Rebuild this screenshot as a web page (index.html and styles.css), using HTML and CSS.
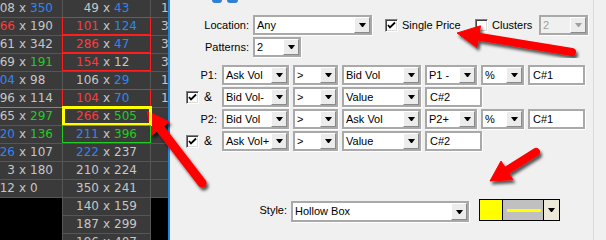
FILE: index.html
```html
<html lang="en">
<head>
  <meta charset="UTF-8">
  <title>Pattern Settings</title>
  <link rel="stylesheet" href="styles.css">
</head>
<body>

  <div class="ladder">
    <div class="col col1">
      <div class="cell"><span class="v"><span class="l">108</span><span class="x">x</span><span class="r bl">350</span></span></div>
      <div class="cell"><span class="v"><span class="l rd">166</span><span class="x">x</span><span class="r">190</span></span></div>
      <div class="cell"><span class="v"><span class="l">161</span><span class="x">x</span><span class="r">342</span></span></div>
      <div class="cell"><span class="v"><span class="l">169</span><span class="x">x</span><span class="r gr">191</span></span></div>
      <div class="cell"><span class="v"><span class="l bl">104</span><span class="x">x</span><span class="r">98</span></span></div>
      <div class="cell sep-grn"><span class="v"><span class="l">196</span><span class="x">x</span><span class="r">114</span></span></div>
      <div class="cell"><span class="v"><span class="l">165</span><span class="x">x</span><span class="r gr">297</span></span></div>
      <div class="cell"><span class="v"><span class="l bl">120</span><span class="x">x</span><span class="r gr">136</span></span></div>
      <div class="cell"><span class="v"><span class="l bl">126</span><span class="x">x</span><span class="r">107</span></span></div>
      <div class="cell"><span class="v"><span class="l">3</span><span class="x">x</span><span class="r">180</span></span></div>
      <div class="cell"><span class="v"><span class="l">112</span><span class="x">x</span><span class="r">0</span></span></div>
    </div>

    <div class="col col2">
      <div class="cell"><span class="v"><span class="l">49</span><span class="x">x</span><span class="r bl">43</span></span></div>
      <div class="cell box-red"><span class="v"><span class="l rd">101</span><span class="x">x</span><span class="r bl">124</span></span></div>
      <div class="cell box-red"><span class="v"><span class="l rd">286</span><span class="x">x</span><span class="r bl">47</span></span></div>
      <div class="cell box-red"><span class="v"><span class="l rd">154</span><span class="x">x</span><span class="r">12</span></span></div>
      <div class="cell"><span class="v"><span class="l">106</span><span class="x">x</span><span class="r bl">29</span></span></div>
      <div class="cell box-red"><span class="v"><span class="l rd">104</span><span class="x">x</span><span class="r bl">70</span></span></div>
      <div class="cell box-yel"><span class="v"><span class="l rd">266</span><span class="x">x</span><span class="r gr">505</span></span></div>
      <div class="cell box-grn"><span class="v"><span class="l bl">211</span><span class="x">x</span><span class="r gr">396</span></span></div>
      <div class="cell"><span class="v"><span class="l bl">222</span><span class="x">x</span><span class="r">237</span></span></div>
      <div class="cell"><span class="v"><span class="l">210</span><span class="x">x</span><span class="r">224</span></span></div>
      <div class="cell"><span class="v"><span class="l">350</span><span class="x">x</span><span class="r">241</span></span></div>
      <div class="cell"><span class="v"><span class="l">140</span><span class="x">x</span><span class="r">159</span></span></div>
      <div class="cell"><span class="v"><span class="l">187</span><span class="x">x</span><span class="r">299</span></span></div>
      <div class="cell"><span class="v"><span class="l">196</span><span class="x">x</span><span class="r">407</span></span></div>
    </div>

    <div class="col col3">
      <div class="cell"><span class="v"><span class="l">146</span><span class="x">x</span><span class="r">150</span></span></div>
      <div class="cell"><span class="v"><span class="l">312</span><span class="x">x</span><span class="r">98</span></span></div>
      <div class="cell"><span class="v"><span class="l">305</span><span class="x">x</span><span class="r">77</span></span></div>
      <div class="cell"><span class="v"><span class="l">340</span><span class="x">x</span><span class="r">61</span></span></div>
      <div class="cell"><span class="v"><span class="l">128</span><span class="x">x</span><span class="r">84</span></span></div>
      <div class="cell"><span class="v"><span class="l">117</span><span class="x">x</span><span class="r">92</span></span></div>
      <div class="cell"></div>
      <div class="cell"></div>
      <div class="cell"></div>
      <div class="cell"></div>
      <div class="cell"></div>
    </div>
  </div>

  <div class="rule"></div>

  <div class="panel">
    <div class="form">
      <div class="icons"><span></span><span></span></div>

      <div class="row r-loc">
        <label class="lbl">Location:</label>
        <div class="dd w-loc"><span class="val">Any</span><span class="btn"></span></div>
        <span class="opt opt1">
          <span class="cb"><svg viewBox="0 0 11 11" width="11" height="11"><polyline points="2,5 4,7.5 9,2.5" fill="none" stroke="#000" stroke-width="1.8"/></svg></span>
          <span class="opt-txt">Single Price</span>
        </span>
        <span class="opt opt2">
          <span class="cb"></span>
          <span class="opt-txt">Clusters</span>
        </span>
        <div class="dd w-cl off"><span class="val">2</span><span class="btn"></span></div>
      </div>

      <div class="row r-pat">
        <label class="lbl">Patterns:</label>
        <div class="dd w-pat"><span class="val">2</span><span class="btn"></span></div>
      </div>

      <div class="row r-p1">
        <span class="lead lead-p">P1:</span>
        <div class="dd w-a"><span class="val">Ask Vol</span><span class="btn"></span></div>
        <div class="dd w-b"><span class="val">&gt;</span><span class="btn"></span></div>
        <div class="dd w-c"><span class="val">Bid Vol</span><span class="btn"></span></div>
        <div class="dd w-d"><span class="val">P1 -</span><span class="btn"></span></div>
        <div class="dd w-e"><span class="val">%</span><span class="btn"></span></div>
        <div class="tx">C#1</div>
      </div>

      <div class="row r-cond">
        <span class="lead"><span class="cb"><svg viewBox="0 0 11 11" width="11" height="11"><polyline points="2,5 4,7.5 9,2.5" fill="none" stroke="#000" stroke-width="1.8"/></svg></span><span class="amp">&amp;</span></span>
        <div class="dd w-a"><span class="val">Bid Vol-</span><span class="btn"></span></div>
        <div class="dd w-b"><span class="val">&gt;</span><span class="btn"></span></div>
        <div class="dd w-c"><span class="val">Value</span><span class="btn"></span></div>
        <div class="tx">C#2</div>
      </div>

      <div class="row r-cond">
        <span class="lead lead-p">P2:</span>
        <div class="dd w-a"><span class="val">Bid Vol</span><span class="btn"></span></div>
        <div class="dd w-b"><span class="val">&gt;</span><span class="btn"></span></div>
        <div class="dd w-c"><span class="val">Ask Vol</span><span class="btn"></span></div>
        <div class="dd w-d"><span class="val">P2+</span><span class="btn"></span></div>
        <div class="dd w-e"><span class="val">%</span><span class="btn"></span></div>
        <div class="tx">C#1</div>
      </div>

      <div class="row r-cond">
        <span class="lead"><span class="cb"><svg viewBox="0 0 11 11" width="11" height="11"><polyline points="2,5 4,7.5 9,2.5" fill="none" stroke="#000" stroke-width="1.8"/></svg></span><span class="amp">&amp;</span></span>
        <div class="dd w-a"><span class="val">Ask Vol+</span><span class="btn"></span></div>
        <div class="dd w-b"><span class="val">&gt;</span><span class="btn"></span></div>
        <div class="dd w-c"><span class="val">Value</span><span class="btn"></span></div>
        <div class="tx">C#2</div>
      </div>

      <div class="row r-style">
        <label class="lbl lbl-style">Style:</label>
        <div class="dd w-style"><span class="val">Hollow Box</span><span class="btn"></span></div>
        <div class="pick">
          <span class="sw"></span>
          <span class="ln"></span>
          <span class="arw"></span>
        </div>
      </div>
    </div>
    <div class="edge"></div>
  </div>

  <svg class="marks" width="606" height="240" viewBox="0 0 606 240">
    <defs>
      <filter id="sh" x="-20%" y="-20%" width="140%" height="140%">
        <feDropShadow dx="2" dy="3" stdDeviation="1.5" flood-color="#000" flood-opacity="0.65"/>
      </filter>
    </defs>
    <g filter="url(#sh)" fill="#f00" stroke="#f00">
      <line x1="572" y1="52" x2="477" y2="36.4" stroke-width="8" stroke-linecap="round"/>
      <polygon points="457,33 476.9,47.4 480.5,25.8" stroke-width="1" stroke-linejoin="round"/>
    </g>
    <g filter="url(#sh)" fill="#f00" stroke="#f00">
      <line x1="202" y1="183" x2="159" y2="127" stroke-width="9" stroke-linecap="round"/>
      <polygon points="147,111 151.7,135.2 169.1,121.8" stroke-width="1" stroke-linejoin="round"/>
    </g>
    <g filter="url(#sh)" fill="#f00" stroke="#f00">
      <line x1="536" y1="152" x2="505" y2="171.5" stroke-width="8" stroke-linecap="round"/>
      <polygon points="490,181 512.8,179.6 501,161" stroke-width="1" stroke-linejoin="round"/>
    </g>
  </svg>

</body>
</html>
```

FILE: styles.css
```css
* { box-sizing: border-box; }
html, body {
  margin: 0;
  height: 100%;
}

body {
  position: relative;
  display: flex;
  width: 606px;
  height: 240px;
  overflow: hidden;
  background: #f0f0f0;
}

/* price ladder */
.ladder {
  display: flex;
  width: 168px;
  background: #000;
  font-family: "DejaVu Sans", sans-serif;
  font-size: 12px;
  color: #c6c6c6;
}

.col {
  display: flex;
  flex-direction: column;
}

.col1 {
  width: 63px;
  border-right: 1px solid #565656;
}

.col2 { width: 88px; }
.col3 { width: 17px; }

.cell {
  position: relative;
  height: 18px;
  line-height: 17px;
  background: #3a3a3a;
  border-bottom: 1px solid #565656;
  white-space: nowrap;
}

.col1 .cell, .col3 .cell { overflow: hidden; }
.col2 .cell { border-right: 1px solid #565656; }

.v {
  display: flex;
  width: 87px;
}

.col1 .v { margin-left: -21px; }
.col3 .v { margin-left: -3px; }

.l { flex: 1; text-align: right; }
.x { padding: 0 4px; }
.r { flex: 1; }

.rd { color: #ff3b3b; }
.bl { color: #2f86f2; }
.gr { color: #22cc22; }

.sep-grn { border-bottom-color: #22cc22; }

.box-red::after,
.box-grn::after,
.box-yel::after {
  content: "";
  position: absolute;
  top: -1px;
  left: -1px;
  right: -1px;
  bottom: 0;
  border: 1px solid #ff1e1e;
  z-index: 1;
}

.box-grn::after { border-color: #22cc22; }

.box-yel::after {
  top: -2px;
  right: -2px;
  bottom: -1px;
  border: 3px solid #ffff00;
}

.rule {
  width: 2px;
  background: #1f88e5;
}

/* settings panel */
.panel {
  flex: 1;
  display: flex;
  font-family: "Liberation Sans", Arial, sans-serif;
  font-size: 11px;
  color: #000;
}

.form {
  flex: 1;
  display: flex;
  flex-direction: column;
}

.edge {
  width: 13px;
  border-left: 1px solid #d9d9d9;
}

.icons {
  flex: none;
  display: flex;
  align-items: flex-start;
  gap: 5px;
  height: 4px;
  padding-left: 42px;
}

.icons span {
  width: 10px;
  height: 3px;
  background: #2f80d6;
  border-radius: 0 0 3px 3px;
}

.icons span + span { width: 11px; }

.row {
  display: flex;
  align-items: center;
  height: 20px;
  gap: 4px;
}

.r-loc { margin-top: 11px; }
.r-pat { margin-top: 2px; }
.r-p1 { margin-top: 8px; }
.r-cond { margin-top: 2px; }

.r-style {
  margin-top: 48px;
  height: 22px;
  align-items: flex-start;
}

.lbl {
  width: 79px;
  text-align: right;
}

.lbl-style {
  width: 117px;
  align-self: center;
}

.dd, .tx {
  display: flex;
  height: 20px;
  background: #fff;
  border: 2px solid #a9a9a9;
  box-shadow: 1px 1px 0 #fff;
}

.dd .val {
  flex: 1;
  padding-left: 2px;
  line-height: 16px;
  white-space: nowrap;
  overflow: hidden;
}

.dd .btn {
  display: flex;
  align-items: center;
  justify-content: center;
  width: 16px;
  background: #ececec;
  border: 1px solid;
  border-color: #fff #8a8a8a #8a8a8a #fff;
}

.dd .btn::before {
  content: "";
  width: 1px;
  border-top: 4px solid #000;
  border-left: 3px solid transparent;
  border-right: 3px solid transparent;
}

.dd.off { background: #f0f0f0; color: #a0a0a0; }
.dd.off .btn::before { border-top-color: #a0a0a0; }

.tx {
  width: 57px;
  padding-left: 3px;
  line-height: 16px;
}

.w-loc { width: 119px; }
.w-cl { width: 49px; }
.w-pat { width: 48px; }
.w-a { width: 67px; }
.w-b { width: 45px; }
.w-c { width: 79px; }
.w-d { width: 52px; }
.w-e { width: 43px; }

.w-style {
  width: 178px;
  height: 21px;
  margin-top: 2px;
}

.opt {
  display: flex;
  align-items: center;
  gap: 4px;
}

.opt1 { width: 86px; margin-left: 9px; }
.opt2 { width: 64px; margin-right: -4px; }

.cb {
  display: flex;
  align-items: center;
  justify-content: center;
  width: 13px;
  height: 13px;
  background: #fff;
  border: 1px solid;
  border-color: #808080 #fff #fff #808080;
  box-shadow: inset 1px 1px #404040, inset -1px -1px #dcdcdc;
}

.lead {
  display: flex;
  align-items: center;
  width: 52px;
  padding-left: 16px;
  margin-right: -4px;
}

.lead-p {
  justify-content: flex-end;
  padding-right: 5px;
}

.amp {
  margin-left: 5px;
  font-size: 12px;
}

.pick {
  display: flex;
  width: 81px;
  height: 22px;
  margin-left: 6px;
  border: 1px solid #000;
}

.sw {
  width: 23px;
  background: #ffff00;
  border-right: 1px solid #000;
}

.ln {
  display: flex;
  align-items: center;
  width: 41px;
  padding: 0 2px 0 4px;
  background: #c0c0c0;
  border-right: 1px solid #000;
}

.ln::before {
  content: "";
  flex: 1;
  height: 3px;
  background: #ffff00;
}

.arw {
  flex: 1;
  display: flex;
  align-items: center;
  justify-content: center;
  background: #ece9d8;
}

.arw::before {
  content: "";
  width: 1px;
  border-top: 4px solid #000;
  border-left: 3px solid transparent;
  border-right: 3px solid transparent;
}

/* annotation arrows */
.marks {
  position: absolute;
  left: 0;
  top: 0;
  pointer-events: none;
}
```
